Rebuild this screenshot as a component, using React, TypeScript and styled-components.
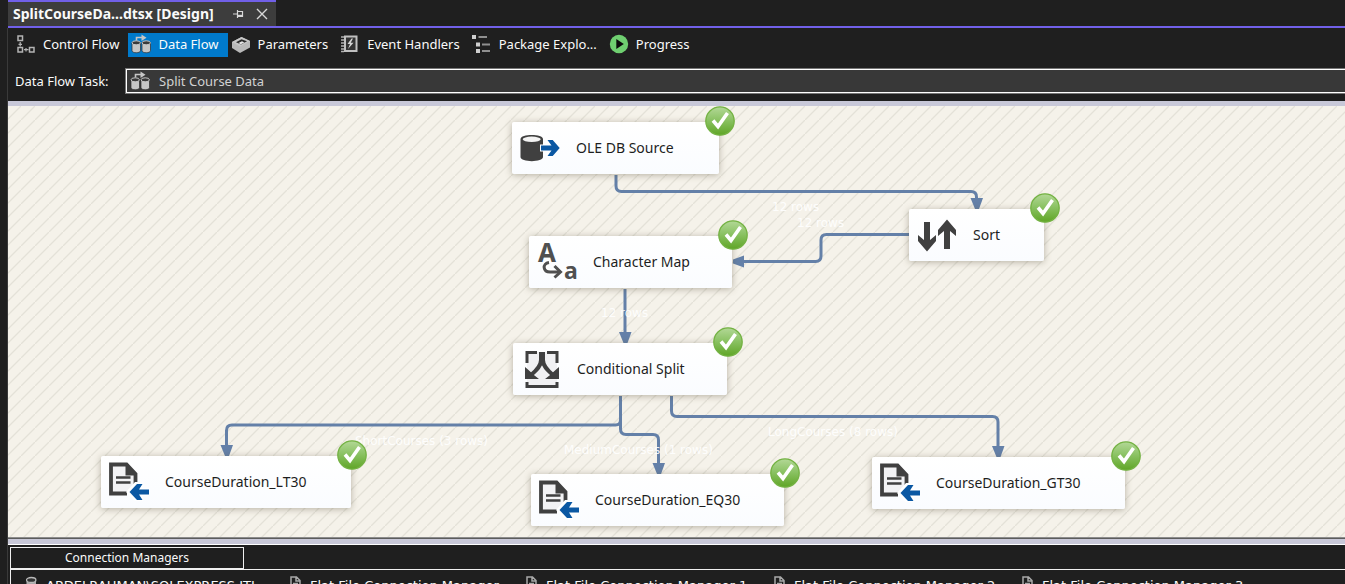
import React from "react";
import styled, { createGlobalStyle } from "styled-components";

const ink = "#404040";
const blue = "#0b58a3";
const flow = "#6480a8";
const purple = "#7160e8";

const GlobalStyle = createGlobalStyle`
  *, *::before, *::after { box-sizing: border-box; }
  body {
    margin: 0;
    background: #1f1f1f;
    color: #fafafa;
    font-family: "Noto Sans", "Open Sans", sans-serif;
    font-size: 13px;
    line-height: 20px;
  }
  button, select { font: inherit; color: inherit; }
  svg { display: block; flex: none; }
`;

const Window = styled.div`
  display: flex;
  flex-direction: column;
  height: 100vh;
  padding-left: 7px;
  overflow: hidden;
`;

const TabStrip = styled.div`
  display: flex;
  margin-left: 1px;
  border-bottom: 2px solid ${purple};
`;

const DocumentTab = styled.div`
  display: flex;
  align-items: center;
  justify-content: space-between;
  width: 268px;
  height: 26px;
  padding: 0 7px 0 5px;
  border-top: 2px solid ${purple};
  background: #3d3d3d;
`;

const DocumentTitle = styled.span`
  flex: 1;
  font-size: 14px;
  font-weight: 700;
  white-space: nowrap;
`;

const TabActions = styled.div`
  display: flex;
  gap: 10px;
`;

const IconButton = styled.button`
  display: flex;
  padding: 0;
  border: 0;
  background: none;
`;

const Designer = styled.main`
  display: flex;
  flex: 1;
  flex-direction: column;
  min-height: 0;
  border-left: 1px solid #3a3a3a;
`;

const Toolbar = styled.nav`
  display: flex;
  padding: 5px 0 0 5px;
`;

const ToolbarTab = styled.button<{ $active?: boolean }>`
  display: flex;
  align-items: center;
  gap: 7px;
  height: 24px;
  padding: 0 9px 2px 3px;
  border: 0;
  background: ${(p) => (p.$active ? "#007acc" : "none")};
  white-space: nowrap;
`;

const TaskRow = styled.div`
  display: flex;
  align-items: center;
  padding: 11px 0 7px 7px;
`;

const TaskLabel = styled.label`
  flex: none;
  width: 110px;
`;

const TaskField = styled.div`
  display: flex;
  flex: 1;
  align-items: center;
  gap: 9px;
  height: 26px;
  padding-left: 4px;
  border: 1px solid #777;
  border-right: 0;
  background: #383838;
  box-shadow: inset 1px 1px #fff, inset 0 -1px #fff;
`;

const TaskSelect = styled.select`
  flex: 1;
  appearance: none;
  padding: 0;
  border: 0;
  background: none;
  color: #d2d2d2;
`;

const Surface = styled.section`
  position: relative;
  flex: 1;
  min-height: 0;
  overflow: hidden;
  border-top: 5px solid #c8c8d8;
  background-color: #f5f2ea;
  background-image: linear-gradient(135deg, transparent 46%, #e4e1d8 47%, #e4e1d8 53%, transparent 54%);
  background-position: -1px 0;
  background-size: 14px 14px;
`;

const Connectors = styled.svg`
  position: absolute;
  inset: 0;
  width: 100%;
  height: 100%;
`;

const RowCount = styled.span<{ $x: number; $y: number }>`
  position: absolute;
  left: ${(p) => p.$x}px;
  top: ${(p) => p.$y}px;
  color: rgba(255, 255, 255, 0.9);
  font-family: "DejaVu Sans", sans-serif;
  font-size: 12px;
  line-height: 16px;
  white-space: nowrap;
`;

const Component = styled.div<{ $x: number; $y: number; $w: number }>`
  position: absolute;
  left: ${(p) => p.$x}px;
  top: ${(p) => p.$y}px;
  display: flex;
  align-items: center;
  gap: 16px;
  width: ${(p) => p.$w}px;
  height: 52px;
  padding-left: 8px;
  border-radius: 2px;
  background: linear-gradient(#fff, #fafcff);
  box-shadow: 0 1px 7px rgba(90, 84, 60, 0.42);
  color: #1e1e1e;
  font-size: 14px;
  line-height: 20px;
  white-space: nowrap;
`;

const Badge = styled.svg`
  position: absolute;
  top: -16px;
  right: -16px;
`;

const Splitter = styled.div`
  flex: none;
  height: 8px;
  border-top: 1px solid #8c8c8c;
  border-bottom: 1px solid #fff;
  background: #c8c8d8;
  box-shadow: inset 0 1px #5c5c5c;
`;

const ConnectionPane = styled.section`
  flex: none;
  height: 39px;
  padding: 2px 0 0 2px;
  overflow: hidden;
`;

const PaneTab = styled.button`
  display: block;
  width: 234px;
  height: 22px;
  padding: 0;
  border: 1px solid #f0f0f0;
  background: none;
  font-size: 12px;
  line-height: 20px;
`;

const ConnectionList = styled.ul`
  display: flex;
  gap: 26px;
  margin: 0;
  padding: 6px 0 0 15px;
  border-top: 1px solid #f0f0f0;
  border-left: 1px solid #f0f0f0;
  list-style: none;
`;

const Connection = styled.li<{ $w: number }>`
  display: flex;
  flex: none;
  gap: 8px;
  width: ${(p) => p.$w}px;
  font-family: "DejaVu Sans", sans-serif;
  font-size: 13px;
  line-height: 20px;
  white-space: nowrap;
`;

/* ---------- toolbar icons ---------- */

const ControlFlowIcon = () => (
  <svg width="20" height="20" viewBox="0 0 20 20" fill="none" stroke="#b4b4b4" strokeWidth="1.5">
    <path d="M2 2h4.500v4.500H2zM2 13.500h4.500V18H2zM13.500 13.500H18V18h-4.500z" />
    <path d="M4.200 8v4.500M2.500 10.300h3.500M8 15.700h4.500M10 14v3.500" strokeWidth="1.200" />
  </svg>
);

const DataFlowIcon = () => (
  <svg width="20" height="20" viewBox="0 0 20 20">
    <path d="M1 8.500v8c0 3 8.500 3 8.500 0v-8zM11 8.500v8c0 3 8.500 3 8.500 0v-8z" fill="#c6c6c6" stroke="#2b2b2b" strokeWidth=".7" />
    <ellipse cx="5.200" cy="8.800" rx="4.200" ry="2" fill="#3a3a3a" stroke="#c6c6c6" />
    <ellipse cx="15.200" cy="8.800" rx="4.200" ry="2" fill="#3a3a3a" stroke="#c6c6c6" />
    <path d="M5.500 6.500V3.500H13" fill="none" stroke="#c6c6c6" strokeWidth="1.600" />
    <path d="M10.500.500l5 3.200-5 3.200z" fill="#c6c6c6" />
  </svg>
);

const ParametersIcon = () => (
  <svg width="20" height="20" viewBox="0 0 20 20">
    <path d="M1 8l9.500-5L19 7v6.500L9 19l-8-5z" fill="#b9b9b9" />
    <path d="M1 8l8 4.500L19 7l-8.500-4z" fill="#c6c6c6" />
    <path d="M5 8.200l5.500-3L16 7.300l-6 3.300z" fill="#2b2b2b" />
    <path d="M7.500 9l3.500-1.800 2.300 1.200-3.500 1.900z" fill="#e8e8e8" />
  </svg>
);

const EventsIcon = () => (
  <svg width="20" height="20" viewBox="0 0 20 20">
    <path d="M5 2.500h11.500v14.500H5z" fill="#333" stroke="#c0c0c0" strokeWidth="2" />
    <path d="M1 3h3M1 6h3M1 9h3M1 12h3M1 15h3M1 17.500h3" stroke="#b0b0b0" strokeWidth="1.300" />
    <path d="M11.500 4.500L7.500 10h2.500l-2 5 5.500-6.200h-2.800l2.300-4.300z" fill="#d4d4d4" />
  </svg>
);

const ExplorerIcon = () => (
  <svg width="20" height="20" viewBox="0 0 20 20">
    <path d="M0 1h4v4H0zM4 8.500h4v4H4zM4 15h4v4H4z" fill="#cfcfcf" />
    <path d="M6.500 3H15M10 10.500h8M10 17h8" stroke="#8f8f8f" strokeWidth="2" />
  </svg>
);

const ProgressIcon = () => (
  <svg width="20" height="20" viewBox="0 0 20 20">
    <circle cx="10" cy="10" r="9.200" fill="#6fcf70" />
    <path d="M7.300 5v10l7.500-5z" fill="#0c0c0c" />
  </svg>
);

/* ---------- component icons ---------- */

const Figure = ({ children }: { children: React.ReactNode }) => (
  <svg width="40" height="40" viewBox="0 0 40 40" fill="none" aria-hidden="true">
    {children}
  </svg>
);

const SourceIcon = () => (
  <Figure>
    <path d="M.500 11v18c0 5.500 22.500 5.500 22.500 0V11c0-5.500-22.500-5.500-22.500 0z" fill={ink} />
    <ellipse cx="11.700" cy="11.300" rx="9" ry="2.700" fill="#f3f3f3" />
    <path d="M20 16.500h6V11h6l8.500 9-8.500 9.500h-6v-6h-6z" fill="#fff" />
    <path d="M21 17.500h10.500L27.500 12h5.200l7 8-7 8h-5.200l4-5.500H21z" fill={blue} />
  </Figure>
);

const CharacterMapIcon = () => (
  <Figure>
    <text x="1" y="20" fontFamily="Noto Sans" fontWeight="700" fontSize="26" fill="#505050">A</text>
    <text x="27" y="37" fontFamily="Noto Sans" fontWeight="700" fontSize="23" fill="#505050">a</text>
    <path d="M12 20.500c-7 1-6.500 10 2 9.500h7" stroke="#fff" strokeWidth="6" />
    <path d="M12 20.500c-7 1-6.500 10 2 9.500h8" stroke="#505050" strokeWidth="3" />
    <path d="M17.500 24l6 6-6 5.500" stroke="#505050" strokeWidth="3" />
  </Figure>
);

const SortIcon = () => (
  <Figure>
    <path d="M7 7h6v18l6-5v6l-9 10.500L1 26v-6l6 5z" fill={ink} />
    <path d="M27 34h6V16l6 5v-6L30 4.500 21 15v6l6-5z" fill={ink} />
  </Figure>
);

const SplitIcon = () => (
  <Figure>
    <path d="M6 3h30v35H6z" fill="#f1f1f3" />
    <path d="M6 14V3.500h10M26 3.500h10V14M6 33v4.500h30V33" stroke={ink} strokeWidth="3" />
    <path d="M20 3v8c0 6-4 10-10 15M22 3v8c0 6 4 10 10 15" stroke={ink} strokeWidth="4" />
    <path d="M4 18v12h14l-4.500-3.500L7.500 21zM38 18v12H24l4.500-3.500 6-5.500z" fill={ink} />
  </Figure>
);

const FlatFileIcon = () => (
  <Figure>
    <path d="M2 3h16l9 9.500V31H2z" fill="#f2f2f4" />
    <path d="M18 31.500H2V2.500h15.500L26.500 12v10" stroke={ink} strokeWidth="3.800" />
    <path d="M16.500 2.500v11h11z" fill={ink} />
    <path d="M7 15.500h14.500M7 20.500h14.500" stroke={ink} strokeWidth="2.300" />
    <path d="M17 30l9-10h8v6h6v8h-6v5h-8z" fill="#fff" />
    <path d="M40 27.500H30l3.500-5.500h-5.500l-7.500 8 7.500 8h5.500L30 32.500h10z" fill={blue} />
  </Figure>
);

const SuccessBadge = () => (
  <Badge width="30" height="30" viewBox="0 0 30 30" role="img" aria-label="Succeeded">
    <defs>
      <linearGradient id="success" x1="0" y1="0" x2="0" y2="1">
        <stop offset="0" stopColor="#b3d897" />
        <stop offset=".45" stopColor="#8cc365" />
        <stop offset="1" stopColor="#5fa526" />
      </linearGradient>
    </defs>
    <circle cx="15" cy="15" r="14.200" fill="url(#success)" stroke="#74b243" strokeWidth="1.300" />
    <path d="M8 14.500l5 6 9.500-13.500" fill="none" stroke="#fff" strokeWidth="3.600" />
  </Badge>
);

const DatabaseGlyph = () => (
  <svg width="12" height="20" viewBox="0 0 12 20">
    <path d="M.500 4v12c0 3 9.500 3 9.500 0V4z" fill="#a9a9a9" />
    <ellipse cx="5.200" cy="4" rx="4.700" ry="2.500" fill="#333" stroke="#b9b9b9" strokeWidth="1.300" />
  </svg>
);

const FileGlyph = () => (
  <svg width="12" height="20" viewBox="0 0 12 20" fill="none" stroke="#a9a9a9" strokeWidth="1.500">
    <path d="M1 14V1h5.500L10 4.500V14zM6 1v4h4M3 7.500h5M3 10h5" />
  </svg>
);

const tabs = [
  { label: "Control Flow", Icon: ControlFlowIcon },
  { label: "Data Flow", Icon: DataFlowIcon, active: true },
  { label: "Parameters", Icon: ParametersIcon },
  { label: "Event Handlers", Icon: EventsIcon },
  { label: "Package Explo...", Icon: ExplorerIcon },
  { label: "Progress", Icon: ProgressIcon },
];

const components = [
  { name: "OLE DB Source", Icon: SourceIcon, x: 504, y: 16, w: 207 },
  { name: "Sort", Icon: SortIcon, x: 901, y: 103, w: 135 },
  { name: "Character Map", Icon: CharacterMapIcon, x: 521, y: 130, w: 203 },
  { name: "Conditional Split", Icon: SplitIcon, x: 505, y: 237, w: 214 },
  { name: "CourseDuration_LT30", Icon: FlatFileIcon, x: 93, y: 350, w: 250 },
  { name: "CourseDuration_EQ30", Icon: FlatFileIcon, x: 523, y: 368, w: 253 },
  { name: "CourseDuration_GT30", Icon: FlatFileIcon, x: 864, y: 351, w: 253 },
];

const rowCounts = [
  { text: "12 rows", x: 764, y: 93 },
  { text: "12 rows", x: 789, y: 109 },
  { text: "12 rows", x: 593, y: 199 },
  { text: "ShortCourses (3 rows)", x: 347, y: 327 },
  { text: "MediumCourses (1 rows)", x: 556, y: 336 },
  { text: "LongCourses (8 rows)", x: 760, y: 318 },
];

const routes = [
  "M608 69v11q0 5.500 5.500 5.500h349.500q5.500 0 5.500 5.500v4",
  "M901 128.500h-82.500q-5.500 0-5.500 5.500V150q0 5.500-5.500 5.500H734",
  "M617 183v46",
  "M612.500 290v24q0 5-5 5H224q-5.500 0-5.500 5.500V341",
  "M612.500 290v33q0 5.500 5.500 5.500h27q5.500 0 5.500 5.500v25",
  "M663.500 290v15q0 5.500 5.500 5.500h315.500q5.500 0 5.500 5.500v26",
];

const arrowHeads = [
  "M962.500 92h12.500l-4 11h-4z",
  "M736 149.500v12l-11-4v-4z",
  "M611 226h12.500l-4 11h-4z",
  "M212.500 339h12.500l-4 11h-4z",
  "M644.500 357h12.500l-4 11h-4z",
  "M984 340h12.500l-4 11h-4z",
];

const connections = [
  { name: "ABDELRAHMAN\\SQLEXPRESS.ITI", w: 238 },
  { name: "Flat File Connection Manager", w: 210 },
  { name: "Flat File Connection Manager 1", w: 222 },
  { name: "Flat File Connection Manager 2", w: 222 },
  { name: "Flat File Connection Manager 3", w: 222 },
];

export default function App() {
  return (
    <>
      <GlobalStyle />
      <Window>
        <TabStrip>
          <DocumentTab>
            <DocumentTitle>SplitCourseDa...dtsx [Design]</DocumentTitle>
            <TabActions>
              <IconButton aria-label="Pin tab">
                <svg width="14" height="14" viewBox="0 0 14 14" fill="none" stroke="#d8d8d8" strokeWidth="1.200">
                  <path d="M2 7h4.500M6.500 3v8M6.500 4.500h5v5h-5" />
                  <path d="M6.500 8.700h5" strokeWidth="1.800" />
                </svg>
              </IconButton>
              <IconButton aria-label="Close tab">
                <svg width="14" height="14" viewBox="0 0 14 14" stroke="#d8d8d8" strokeWidth="1.400">
                  <path d="M2 2l10 10M12 2L2 12" />
                </svg>
              </IconButton>
            </TabActions>
          </DocumentTab>
        </TabStrip>
        <Designer>
          <Toolbar>
            {tabs.map(({ label, Icon, active }) => (
              <ToolbarTab key={label} $active={active}>
                <Icon />
                {label}
              </ToolbarTab>
            ))}
          </Toolbar>
          <TaskRow>
            <TaskLabel htmlFor="task">Data Flow Task:</TaskLabel>
            <TaskField>
              <DataFlowIcon />
              <TaskSelect id="task">
                <option>Split Course Data</option>
              </TaskSelect>
            </TaskField>
          </TaskRow>
          <Surface>
            <Connectors>
              <g fill="none" stroke={flow} strokeWidth="3">
                {routes.map((d) => (
                  <path key={d} d={d} />
                ))}
              </g>
              <g fill={flow}>
                {arrowHeads.map((d) => (
                  <path key={d} d={d} />
                ))}
              </g>
            </Connectors>
            {rowCounts.map(({ text, x, y }) => (
              <RowCount key={`${x}-${y}`} $x={x} $y={y}>
                {text}
              </RowCount>
            ))}
            {components.map(({ name, Icon, x, y, w }) => (
              <Component key={name} $x={x} $y={y} $w={w}>
                <Icon />
                {name}
                <SuccessBadge />
              </Component>
            ))}
          </Surface>
          <Splitter />
          <ConnectionPane>
            <PaneTab>Connection Managers</PaneTab>
            <ConnectionList>
              {connections.map(({ name, w }, i) => (
                <Connection key={name} $w={w}>
                  {i === 0 ? <DatabaseGlyph /> : <FileGlyph />}
                  {name}
                </Connection>
              ))}
            </ConnectionList>
          </ConnectionPane>
        </Designer>
      </Window>
    </>
  );
}
